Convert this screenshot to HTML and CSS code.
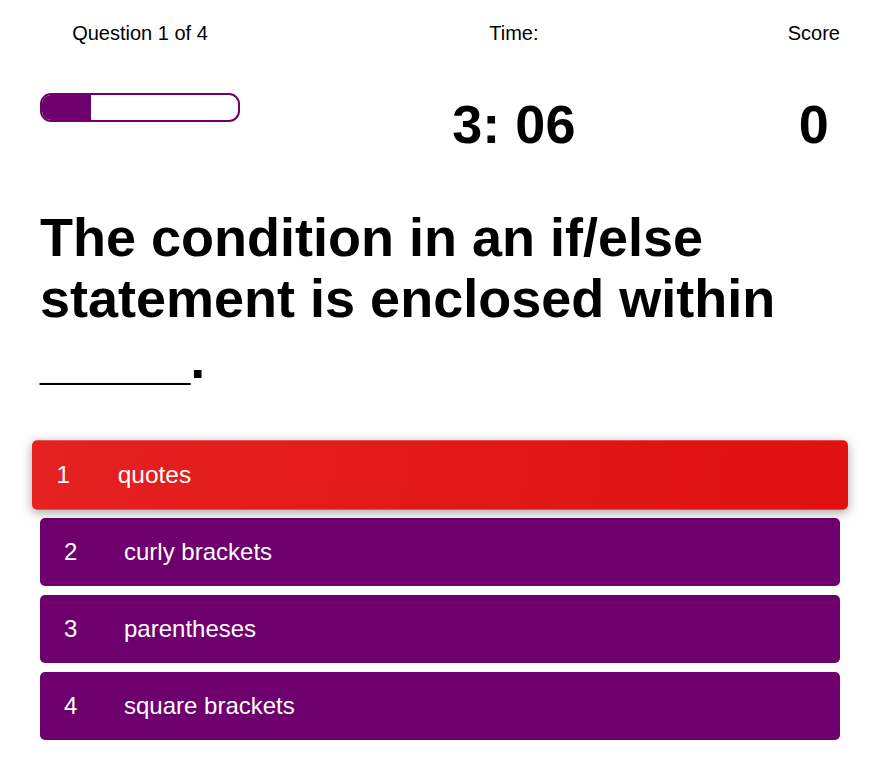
FILE: index.html
```html
<!DOCTYPE html>
<html lang="en">
<head>
<meta charset="utf-8">
<title>Quiz</title>
<link rel="stylesheet" href="styles.css">
</head>
<body>
<main class="quiz">
  <header class="stats">
    <div class="stat stat-progress">
      <p class="stat-label">Question 1 of 4</p>
      <div class="progress"><div class="progress-fill" style="width:25%"></div></div>
    </div>
    <div class="stat">
      <p class="stat-label">Time:</p>
      <p class="stat-value">3: 06</p>
    </div>
    <div class="stat">
      <p class="stat-label">Score</p>
      <p class="stat-value">0</p>
    </div>
  </header>
  <h1 class="question">The condition in an if/else statement is enclosed within _____.</h1>
  <ol class="answers">
    <li><button class="answer is-active"><span class="answer-num">1</span><span class="answer-text">quotes</span></button></li>
    <li><button class="answer"><span class="answer-num">2</span><span class="answer-text">curly brackets</span></button></li>
    <li><button class="answer"><span class="answer-num">3</span><span class="answer-text">parentheses</span></button></li>
    <li><button class="answer"><span class="answer-num">4</span><span class="answer-text">square brackets</span></button></li>
  </ol>
</main>
</body>
</html>
```

FILE: styles.css
```css
html, body {
  margin: 0;
  padding: 0;
  background: #ffffff;
}
body {
  font-family: "Liberation Sans", Arial, Helvetica, sans-serif;
  color: #000;
}
.quiz {
  width: 800px;
  margin: 0 0 0 40px;
  padding-top: 22px;
}
.stats {
  display: flex;
  justify-content: space-between;
  align-items: flex-start;
}
.stat {
  text-align: center;
}
.stat-progress {
  width: 200px;
}
.stat-label {
  margin: 0;
  font-size: 20px;
  line-height: 23px;
}
.stat-value {
  margin: 48px 0 0;
  font-size: 54px;
  line-height: 62px;
  font-weight: bold;
}
.progress {
  margin-top: 48px;
  height: 25px;
  border: 2px solid #6e006e;
  border-radius: 11px;
  overflow: hidden;
  box-sizing: content-box;
}
.progress-fill {
  height: 100%;
  background: #6e006e;
}
.question {
  margin: 52px 0 0;
  font-size: 54px;
  line-height: 61px;
  font-weight: bold;
}
.answers {
  list-style: none;
  margin: 51px 0 0;
  padding: 0;
  display: flex;
  flex-direction: column;
  gap: 9px;
}
.answers li {
  margin: 0;
}
.answer {
  display: flex;
  align-items: center;
  width: 100%;
  height: 68px;
  padding: 0 0 0 24px;
  border: none;
  border-radius: 5px;
  background: #6e006e;
  color: #fff;
  font-family: "Liberation Sans", Arial, Helvetica, sans-serif;
  font-size: 24px;
  text-align: left;
  cursor: pointer;
  box-sizing: border-box;
}
.answer-num {
  width: 60px;
  flex: none;
}
.answer.is-active {
  background: linear-gradient(100deg, #e52121 0%, #e01010 100%);
  transform: scale(1.02);
  box-shadow: 0 3px 10px rgba(0, 0, 0, 0.35);
}
```
